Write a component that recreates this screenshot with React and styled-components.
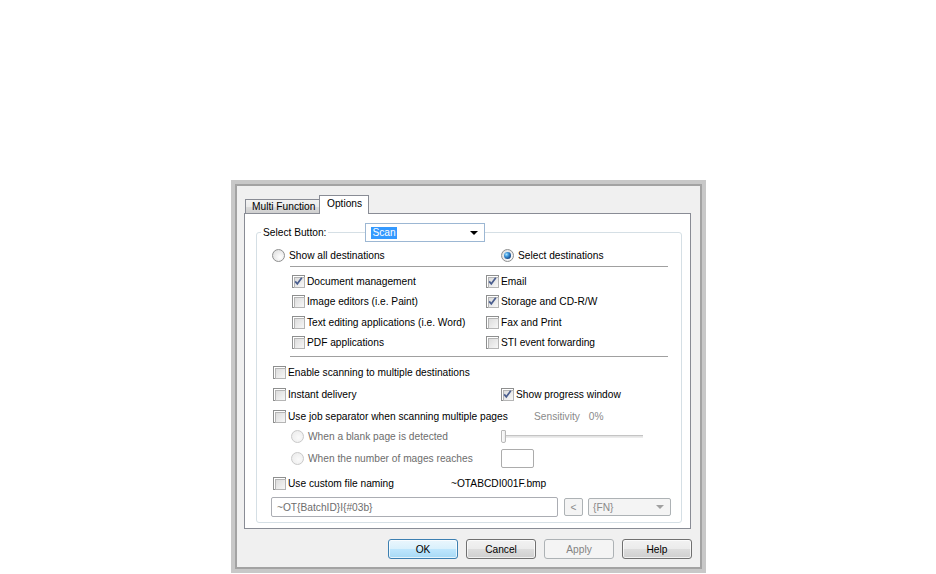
import React from "react";
import styled, { createGlobalStyle } from "styled-components";

const Global = createGlobalStyle`
  html, body { margin: 0; padding: 0; background: #ffffff; }
  body { font-family: "Liberation Sans", Arial, sans-serif; font-size: 10.2px; color: #000; }
  * { box-sizing: border-box; }
`;

const Page = styled.div`
  width: 936px;
  height: 574px;
  padding: 180px 0 0 231px;
  overflow: hidden;
`;

const Dialog = styled.div`
  width: 475px;
  height: 393px;
  border: 4px solid #c8c8c8;
  box-shadow: inset 0 0 0 2px #a3a3a3;
  background: #f0f0f0;
  padding: 11px 11px 0 9px;
  display: flex;
  flex-direction: column;
`;

const TabStrip = styled.div`
  display: flex;
  align-items: flex-end;
  height: 19px;
  margin-left: 1px;
  margin-bottom: -1px;
  position: relative;
  z-index: 1;
`;

const Tab = styled.div`
  width: ${(p) => p.$w}px;
  height: ${(p) => (p.$active ? "19px" : "15px")};
  padding: ${(p) => (p.$active ? "2px 0 0 7px" : "1px 0 0 6px")};
  margin-left: ${(p) => (p.$active ? "-1px" : "0")};
  border: 1px solid #898c95;
  border-bottom: ${(p) => (p.$active ? "none" : "1px solid #898c95")};
  background: ${(p) =>
    p.$active ? "#ffffff" : "linear-gradient(#f3f3f3, #ebebeb 50%, #dddddd 51%, #cfcfcf)"};
  display: flex;
  align-items: flex-start;
  line-height: 12px;
  white-space: nowrap;
`;

const Panel = styled.div`
  width: 447px;
  height: 316px;
  border: 1px solid #898c95;
  background: #ffffff;
  padding: 9px 0 0 11px;
`;

const Fieldset = styled.fieldset`
  width: 426px;
  margin: 0;
  padding: 0 0 5px 0;
  border: 1px solid #d5dfe5;
  border-radius: 3px;
  min-inline-size: 0;
`;

const Legend = styled.legend`
  margin-left: 4px;
  padding: 0;
  display: flex;
  align-items: center;
  height: 19px;
`;

const LegendText = styled.span`
  padding: 0 2px;
  white-space: nowrap;
`;

const LegendLine = styled.span`
  width: 37px;
  height: 1px;
  background: #d5dfe5;
`;

const Combo = styled.div`
  width: 120px;
  height: 19px;
  border: 1px solid #9cb7d3;
  background: #fff;
  display: flex;
  align-items: center;
  padding: 0 6px 0 5px;
  justify-content: space-between;
`;

const Selected = styled.span`
  background: #3399ff;
  color: #fff;
  padding: 0 1px;
  line-height: 12px;
`;

const Caret = styled.span`
  width: 0;
  height: 0;
  border-left: 4px solid transparent;
  border-right: 4px solid transparent;
  border-top: 4px solid ${(p) => (p.$disabled ? "#a0a0a0" : "#000")};
`;

const Row = styled.div`
  display: grid;
  grid-template-columns: ${(p) => p.$cols || "228px 1fr"};
  align-items: center;
  height: 20px;
  margin-top: ${(p) => p.$mt || 0}px;
  padding-left: 16px;
  white-space: nowrap;
`;

const Item = styled.label`
  display: flex;
  align-items: center;
  gap: 2px;
  margin-left: ${(p) => p.$ml || 0}px;
  color: ${(p) => (p.$disabled ? "#6d6d6d" : "#000")};
`;

const DestBox = styled.div`
  margin: 1px 13px 0 33px;
  border-top: 1px solid #a0a0a0;
  border-bottom: 1px solid #a0a0a0;
  padding: 4px 0 3px 2px;
  display: grid;
  grid-template-columns: 194px 1fr;
  grid-auto-rows: 20.5px;
  align-items: center;
  white-space: nowrap;
`;

const Box = styled.span`
  position: relative;
  flex: none;
  width: 13px;
  height: 13px;
  border: 1px solid #8e8f8f;
  background: #fff;
  &::before {
    content: "";
    position: absolute;
    left: 1px;
    top: 1px;
    width: 9px;
    height: 9px;
    border: 1px solid #b5b5b5;
    background: linear-gradient(135deg, #dcdcdc, #f7f7f7);
  }
  svg {
    position: absolute;
    left: 0;
    top: 0;
  }
`;

const Check = ({ checked }) => (
  <Box>
    {checked && (
      <svg width="11" height="11" viewBox="0 0 11 11">
        <path d="M2.2 5.4 L4.3 7.8 L8.8 1.8" fill="none" stroke="#4a5e8f" strokeWidth="1.7" />
      </svg>
    )}
  </Box>
);

const RadioCircle = styled.span`
  position: relative;
  flex: none;
  width: 13px;
  height: 13px;
  border-radius: 50%;
  border: 1px solid ${(p) => (p.$disabled ? "#c9c9c9" : "#8e8f8f")};
  background: ${(p) =>
    p.$disabled
      ? "radial-gradient(circle at 60% 60%, #fafafa, #e9e9e9)"
      : "radial-gradient(circle at 65% 65%, #ffffff, #d9d9d9)"};
  margin-right: 2px;
  &::after {
    content: "";
    display: ${(p) => (p.$checked ? "block" : "none")};
    position: absolute;
    left: 2px;
    top: 2px;
    width: 7px;
    height: 7px;
    border-radius: 50%;
    background: radial-gradient(circle at 35% 35%, #a8e4ff 0, #3c93d8 35%, #1b4f8e 70%, #0d2f61 100%);
  }
`;

const SensRow = styled.div`
  display: flex;
  gap: 9px;
  margin-left: 33px;
  color: #8a8a8a;
`;

const Slider = styled.div`
  position: relative;
  width: 142px;
  height: 13px;
  display: flex;
  align-items: center;
`;

const Track = styled.div`
  width: 100%;
  height: 3px;
  border-top: 1px solid #c4c4c4;
  border-bottom: 1px solid #ececec;
  background: #e4e4e4;
`;

const Thumb = styled.div`
  position: absolute;
  left: 0;
  top: 0;
  width: 5px;
  height: 13px;
  border: 1px solid #b8b8b8;
  border-radius: 1px 1px 2px 2px;
  background: linear-gradient(90deg, #fdfdfd, #ececec);
`;

const SmallInput = styled.div`
  width: 33px;
  height: 19px;
  border: 1px solid #acacac;
  border-radius: 2px;
  background: #fff;
`;

const FileRow = styled.div`
  display: flex;
  align-items: center;
  margin-top: 4px;
  padding-left: 14px;
  height: 20px;
`;

const TextBox = styled.div`
  width: 287px;
  height: 20px;
  border: 1px solid #abadb3;
  border-radius: 2px;
  background: #fff;
  color: #6d6d6d;
  padding-left: 5px;
  display: flex;
  align-items: center;
`;

const SmallButton = styled.div`
  width: 19px;
  height: 18px;
  margin-left: 6px;
  border: 1px solid #adb2b5;
  border-radius: 2px;
  background: #f4f4f4;
  color: #8a8a8a;
  display: flex;
  align-items: center;
  justify-content: center;
`;

const DisabledCombo = styled.div`
  width: 83px;
  height: 18px;
  margin-left: 5px;
  border: 1px solid #adb2b5;
  border-radius: 2px;
  background: #f4f4f4;
  color: #8a8a8a;
  display: flex;
  align-items: center;
  justify-content: space-between;
  padding: 0 6px 0 4px;
`;

const ButtonRow = styled.div`
  display: flex;
  justify-content: flex-end;
  gap: 8px;
  margin-top: 10px;
  margin-right: -1px;
`;

const Button = styled.div`
  width: 70px;
  height: 20px;
  border-radius: 3px;
  display: flex;
  align-items: center;
  justify-content: center;
  border: 1px solid ${(p) => (p.$focus ? "#3c7fb1" : p.$disabled ? "#adb2b5" : "#707070")};
  color: ${(p) => (p.$disabled ? "#838383" : "#000")};
  background: ${(p) =>
    p.$focus
      ? "linear-gradient(#eaf6fd, #d9f0fc 50%, #bee6fd 51%, #a7d9f5)"
      : p.$disabled
      ? "#f4f4f4"
      : "linear-gradient(#f2f2f2, #ebebeb 50%, #dddddd 51%, #cfcfcf)"};
  box-shadow: inset 0 0 0 1px ${(p) => (p.$disabled ? "transparent" : "rgba(255,255,255,0.7)")};
`;

export default function App() {
  return (
    <Page>
      <Global />
      <Dialog>
        <TabStrip>
          <Tab $w={75}>Multi Function</Tab>
          <Tab $active $w={50}>Options</Tab>
        </TabStrip>
        <Panel>
          <Fieldset>
            <Legend>
              <LegendText>Select Button:</LegendText>
              <LegendLine />
              <Combo>
                <Selected>Scan</Selected>
                <Caret />
              </Combo>
            </Legend>

            <Row $mt={3}>
              <Item $ml={-1}>
                <RadioCircle />
                Show all destinations
              </Item>
              <Item>
                <RadioCircle $checked />
                Select destinations
              </Item>
            </Row>

            <DestBox>
              <Item><Check checked />Document management</Item>
              <Item><Check checked />Email</Item>
              <Item><Check />Image editors (i.e. Paint)</Item>
              <Item><Check checked />Storage and CD-R/W</Item>
              <Item><Check />Text editing applications (i.e. Word)</Item>
              <Item><Check />Fax and Print</Item>
              <Item><Check />PDF applications</Item>
              <Item><Check />STI event forwarding</Item>
            </DestBox>

            <Row $mt={5}>
              <Item><Check />Enable scanning to multiple destinations</Item>
            </Row>
            <Row $mt={2}>
              <Item><Check />Instant delivery</Item>
              <Item><Check checked />Show progress window</Item>
            </Row>
            <Row $mt={2}>
              <Item><Check />Use job separator when scanning multiple pages</Item>
              <SensRow>
                <span>Sensitivity</span>
                <span>0%</span>
              </SensRow>
            </Row>
            <Row>
              <Item $ml={18} $disabled>
                <RadioCircle $disabled />
                When a blank page is detected
              </Item>
              <Slider>
                <Track />
                <Thumb />
              </Slider>
            </Row>
            <Row $mt={2}>
              <Item $ml={18} $disabled>
                <RadioCircle $disabled />
                When the number of mages reaches
              </Item>
              <SmallInput />
            </Row>
            <Row $mt={5} $cols="178px 1fr">
              <Item><Check />Use custom file naming</Item>
              <span>~OTABCDI001F.bmp</span>
            </Row>
            <FileRow>
              <TextBox>~OT{"{BatchID}"}I{"{#03b}"}</TextBox>
              <SmallButton>&lt;</SmallButton>
              <DisabledCombo>
                <span>{"{FN}"}</span>
                <Caret $disabled />
              </DisabledCombo>
            </FileRow>
          </Fieldset>
        </Panel>
        <ButtonRow>
          <Button $focus>OK</Button>
          <Button>Cancel</Button>
          <Button $disabled>Apply</Button>
          <Button>Help</Button>
        </ButtonRow>
      </Dialog>
    </Page>
  );
}
